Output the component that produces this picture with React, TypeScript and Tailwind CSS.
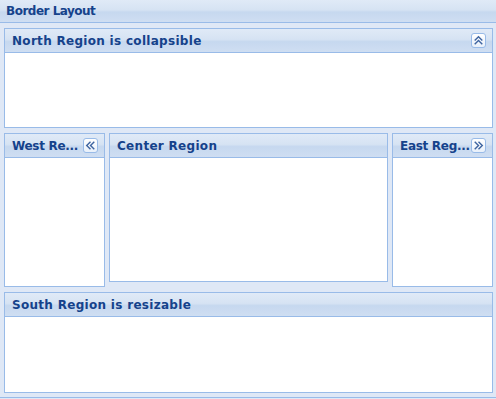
import type { ReactNode } from "react";

const font = { fontFamily: '"DejaVu Sans", Verdana, sans-serif' };

function ToolButton({ dir }: { dir: "up" | "left" | "right" }) {
  const paths: Record<string, string> = {
    up: "M4 7.5 L7.5 4 L11 7.5 M4 11 L7.5 7.5 L11 11",
    left: "M7.5 4 L4 7.5 L7.5 11 M11 4 L7.5 7.5 L11 11",
    right: "M4 4 L7.5 7.5 L4 11 M7.5 4 L11 7.5 L7.5 11",
  };
  return (
    <div className="w-[15px] h-[15px] shrink-0 rounded-[3px] border border-[#99bbe8] bg-[linear-gradient(#ffffff,#e8f0fa)] flex items-center justify-center">
      <svg width="13" height="13" viewBox="1.5 1.5 12 12">
        <path d={paths[dir]} fill="none" stroke="#3e64a0" strokeWidth="1.3" />
      </svg>
    </div>
  );
}

function Panel({
  title,
  tool,
  tight,
  className = "",
  children,
}: {
  title: string;
  tool?: "up" | "left" | "right";
  tight?: boolean;
  className?: string;
  children?: ReactNode;
}) {
  return (
    <div className={`flex flex-col border border-[#99bbe8] bg-white ${className}`}>
      <div className="h-[24px] shrink-0 flex items-center justify-between pl-[7px] pr-[6px] border-b border-[#99bbe8] bg-[linear-gradient(#e0eaf7_0%,#d6e3f3_45%,#c6d8ef_55%,#cfdef2_100%)]">
        <span
          className={`text-[12px] font-bold text-[#15428b] whitespace-nowrap ${
            tight ? "tracking-[-0.3px]" : "tracking-[0.3px]"
          }`}
        >
          {title}
        </span>
        {tool && <ToolButton dir={tool} />}
      </div>
      <div className="flex-1 bg-white">{children}</div>
    </div>
  );
}

export default function App() {
  return (
    <div className="w-[496px] h-[399px] flex flex-col bg-[#dfe8f6] overflow-hidden" style={font}>
      <div className="h-[23px] shrink-0 flex items-center pl-[6px] border-b border-[#99bbe8] bg-[linear-gradient(#e0eaf7_0%,#d6e3f3_45%,#c6d8ef_55%,#cfdef2_100%)]">
        <span className="text-[12px] font-bold text-[#15428b] tracking-[-0.5px]">Border Layout</span>
      </div>
      <div className="flex-1 flex flex-col gap-[5px] pt-[5px] pl-[4px] pr-[3px] border-b border-[#99bbe8] mb-[1px]">
        <Panel title="North Region is collapsible" tool="up" className="h-[100px]" />
        <div className="h-[154px] flex gap-[4px]">
          <Panel title="West Re..." tool="left" tight className="w-[101px]" />
          <Panel title="Center Region" className="flex-1 mb-[5px]" />
          <Panel title="East Reg..." tool="right" tight className="w-[101px]" />
        </div>
        <Panel title="South Region is resizable" className="h-[101px]" />
      </div>
    </div>
  );
}
